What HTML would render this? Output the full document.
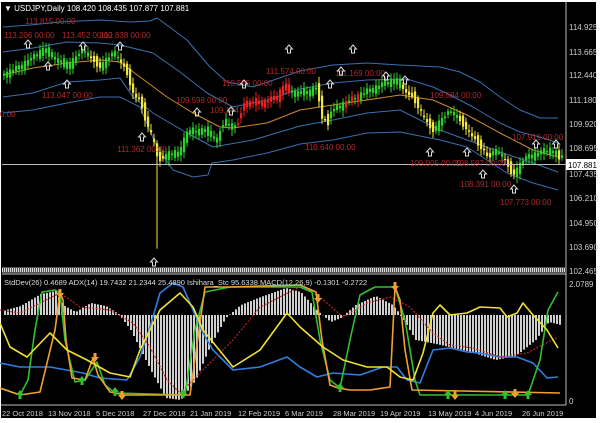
<!DOCTYPE html>
<html><head><meta charset="utf-8"><style>
html,body{margin:0;padding:0;background:#fff;width:600px;height:423px;overflow:hidden}
svg{display:block}
text{font-family:"Liberation Sans",sans-serif}
</style></head><body>
<svg id="s" width="600" height="423" viewBox="0 0 600 423" xmlns="http://www.w3.org/2000/svg">
<rect x="0" y="0" width="600" height="423" fill="#fff"/>
<rect x="1" y="2" width="595" height="416" fill="#000"/>
<line x1="566" y1="2" x2="566" y2="405" stroke="#bbb" stroke-width="1"/>
<line x1="1" y1="405" x2="566" y2="405" stroke="#bbb" stroke-width="1"/>
<g id="bands" fill="none" stroke-width="1" stroke-linejoin="round">
<path stroke="#3a6fb0" d="M3 27L30 25L60 22L100 20L130 22L150 21L157 18L160 20L187 40L210 67L227 82L253 87L300 71L333 65L367 63L400 65L440 67L460 72L480 82L500 97L520 110L540 118L558 118"/>
<path stroke="#3a6fb0" d="M3 52L33 48L67 42L100 43L120 45L153 53L180 72L207 93L233 107L267 100L300 89L333 83L367 80L407 79L433 87L450 95L473 107L500 123L520 132L540 137L558 143"/>
<path stroke="#d08a2a" d="M3 75L33 68L67 63L100 60L120 62L140 77L167 97L193 113L220 127L233 128L267 123L300 110L333 105L400 95L433 100L467 115L500 133L533 150L558 157"/>
<path stroke="#3a6fb0" d="M3 97L33 93L67 82L100 80L120 78L133 97L153 113L187 133L213 147L253 140L300 126L333 120L367 113L400 110L440 130L467 140L500 152L533 163L558 172"/>
<path stroke="#3a6fb0" d="M3 113L33 110L67 103L100 97L120 97L140 107L157 147L173 170L193 177L208 175L212 163L233 160L267 153L300 144L333 140L367 133L400 132L440 140L467 147L487 160L507 173L533 183L558 190"/>
</g>
<g id="candles"></g>
<line x1="2" y1="164.5" x2="566" y2="164.5" stroke="#bbb" stroke-width="1"/>
<rect x="566" y="159" width="30" height="11" fill="#fff"/>
<text x="568" y="168" font-size="8" fill="#000">107.881</text>
<g font-size="8" fill="#ccc">
<text x="569" y="30">114.925</text><text x="569" y="55">113.665</text><text x="569" y="78">112.440</text>
<text x="569" y="103">111.180</text><text x="569" y="127">109.920</text><text x="569" y="151">108.695</text>
<text x="569" y="177">107.435</text><text x="569" y="201">106.210</text><text x="569" y="226">104.950</text>
<text x="569" y="250">103.690</text><text x="569" y="274">102.465</text><text x="569" y="287">2.0789</text>
<text x="569" y="404">0</text>
</g>
<g font-size="8" fill="#b02a2a">
<text x="25" y="24">113.815 00:00</text><text x="4" y="38">113.206 00:00</text><text x="62" y="38">113.452 00:00</text>
<text x="100" y="38">112.838 00:00</text><text x="42" y="98">113.047 00:00</text><text x="0" y="117">0.00</text>
<text x="176" y="103">109.598 00:00</text><text x="210" y="113">109.144</text><text x="222" y="86">110.525 00:00</text>
<text x="266" y="74">111.574 00:00</text><text x="335" y="76">111.169 00:00</text><text x="117" y="152">111.362 00:00</text>
<text x="305" y="150">110.640 00:00</text><text x="430" y="98">109.584 00:00</text><text x="410" y="166">109.005 00:00</text>
<text x="455" y="166">108.597 00:00</text><text x="460" y="187">108.391 00:00</text><text x="500" y="205">107.773 00:00</text>
<text x="512" y="140">107.919 00:00</text>
</g>
<g id="arrows" fill="none" stroke="#ddd" stroke-width="1"></g>
<text x="4" y="11" font-size="8" fill="#fff">▼ USDJPY,Daily  108.420 108.435 107.877 107.881</text>
<rect x="2" y="267" width="563" height="6" fill="#555"/>
<rect x="2" y="268" width="563" height="4" fill="url(#dots)"/>
<defs><pattern id="dots" width="2" height="4" patternUnits="userSpaceOnUse"><rect width="1" height="4" fill="#ddd"/></pattern></defs>
<line x1="2" y1="274" x2="566" y2="274" stroke="#ccc"/>
<g id="hist"></g>
<g id="ind" fill="none" stroke-width="1.6"></g>
<text x="4" y="285" font-size="7.5" fill="#ddd">StdDev(26) 0.4689  ADX(14) 19.7432 21.2344 25.4890  Ishihara_Stc 95.6338  MACD(12,26,9) -0.1301 -0.2722</text>
<g font-size="7.5" fill="#ccc">
<text x="2" y="416">22 Oct 2018</text><text x="48" y="416">13 Nov 2018</text><text x="96" y="416">5 Dec 2018</text>
<text x="143" y="416">27 Dec 2018</text><text x="190" y="416">21 Jan 2019</text><text x="238" y="416">12 Feb 2019</text>
<text x="285" y="416">6 Mar 2019</text><text x="333" y="416">28 Mar 2019</text><text x="380" y="416">19 Apr 2019</text>
<text x="428" y="416">13 May 2019</text><text x="475" y="416">4 Jun 2019</text><text x="522" y="416">26 Jun 2019</text>
</g>
</svg>
<script>
var NS="http://www.w3.org/2000/svg";
function el(p,t,a){var e=document.createElementNS(NS,t);for(var k in a)e.setAttribute(k,a[k]);document.getElementById(p).appendChild(e);return e;}
var PY=[[3,75],[20,67],[43,50],[67,67],[83,50],[100,67],[113,53],[120,60],[127,73],[133,93],[140,100],[145,118],[153,140],[158,160],[170,153],[177,157],[187,133],[203,130],[217,140],[223,123],[237,127],[243,103],[263,103],[277,97],[283,87],[293,93],[307,93],[317,87],[323,123],[333,110],[360,95],[393,80],[413,97],[425,120],[433,130],[450,110],[458,118],[470,133],[487,155],[500,152],[513,175],[525,158],[540,153],[550,150],[558,157]];
function yAt(x){for(var i=1;i<PY.length;i++){if(x<=PY[i][0]){var a=PY[i-1],b=PY[i],t=(x-a[0])/(b[0]-a[0]);return a[1]+(b[1]-a[1])*t;}}return PY[PY.length-1][1];}
function price(x){return 114.925-(yAt(x)-27)/19.58;}
function Y(p){return 27+(114.925-p)*19.58;}
for(var x=4;x<=562;x+=3){
 var p0=price(x-3),p1=price(x),n=Math.sin(x*1.7)*0.25;
 var o=p0+n,c=p1-n*0.5;var hi=Math.max(o,c)+0.12+Math.abs(Math.sin(x*2.3))*0.2,lo=Math.min(o,c)-0.12-Math.abs(Math.cos(x*1.3))*0.2;
 var col="#2fd12f";
 if(p1-price(x-9)<-0.35)col="#f2e640";
 if((x>235&&x<292)||(x>345&&x<360&&x%2==0))col="#ee2020";
 if(x==157)lo=103.6;
 el("candles","line",{x1:x,y1:Y(hi),x2:x,y2:Y(lo),stroke:col,"stroke-width":1});
 var yt=Y(Math.max(o,c)),yb=Y(Math.min(o,c));if(yb-yt<1.5)yb=yt+1.5;
 el("candles","rect",{x:x-1,y:yt,width:2.2,height:yb-yt,fill:col});
}
[[48,62],[28,40],[67,80],[83,42],[120,42],[142,133],[197,108],[244,80],[231,107],[289,45],[330,80],[341,67],[353,45],[386,72],[405,76],[430,148],[467,148],[483,170],[514,185],[536,140],[556,140],[154,258]].forEach(function(a){
 var x=a[0],y=a[1];el("arrows","path",{d:"M"+x+" "+y+"l-3.5 4h2v4h3v-4h2z"});});
function curve(pts,c,dash){var d="";pts.forEach(function(p,i){d+=(i?"L":"M")+p[0]+" "+p[1];});var a={d:d,stroke:c,"stroke-linejoin":"round"};if(dash){a["stroke-dasharray"]="2 1.5";a["stroke-width"]=1.2;}el("ind","path",a);}
function H(x){var k=[[5,310],[20,306],[40,294],[55,291],[62,305],[75,312],[90,303],[105,306],[118,314],[130,330],[150,370],[165,398],[180,400],[195,380],[210,345],[225,318],[240,305],[260,297],[285,288],[300,292],[318,312],[330,322],[340,318],[355,305],[375,296],[392,305],[400,315],[415,340],[440,345],[470,352],[495,360],[515,356],[535,340],[548,322],[560,325]];for(var i=1;i<k.length;i++)if(x<=k[i][0]){var a=k[i-1],b=k[i],t=(x-a[0])/(b[0]-a[0]);return a[1]+(b[1]-a[1])*t;}return 320;}
for(var x=4;x<=560;x+=3){var y=H(x);el("hist","rect",{x:x,y:Math.min(y,315),width:2,height:Math.abs(y-315)||1,fill:"#cfcfcf"});}
curve([[0,363],[20,367],[50,367],[83,373],[100,378],[127,380],[140,357],[150,327],[160,293],[173,283],[183,287],[193,310],[203,333],[213,350],[233,370],[260,367],[287,357],[300,367],[317,377],[333,373],[360,375],[383,367],[397,367],[407,380],[420,383],[433,350],[450,348],[467,352],[480,353],[500,357],[517,357],[533,363],[547,378],[558,377]],"#2f7fe0");
curve([[0,310],[20,313],[60,293],[80,307],[110,310],[133,323],[150,347],[167,380],[180,393],[200,373],[233,340],[260,307],[300,287],[320,297],[343,317],[367,303],[390,297],[410,307],[433,333],[450,345],[473,348],[500,357],[527,353],[558,337]],"#c02020",1);
curve([[0,388],[20,395],[28,380],[35,330],[42,292],[55,290],[60,293],[65,340],[75,382],[85,380],[97,362],[105,385],[115,393],[185,395],[195,330],[205,292],[230,287],[300,287],[312,292],[320,340],[330,380],[340,388],[350,340],[360,295],[375,287],[395,287],[405,320],[415,380],[420,395],[528,395],[540,360],[548,310],[558,292]],"#30c030");
curve([[0,388],[20,395],[40,392],[55,330],[60,292],[63,300],[66,340],[72,378],[85,380],[93,358],[98,375],[110,392],[125,395],[190,395],[205,287],[230,287],[300,285],[316,292],[322,340],[330,385],[338,388],[350,390],[370,390],[390,387],[395,287],[400,300],[405,350],[412,390],[560,393]],"#f0a030");
curve([[0,323],[10,347],[27,357],[50,333],[67,350],[87,360],[110,373],[130,377],[140,350],[160,310],[180,293],[193,307],[203,330],[233,367],[260,350],[287,313],[300,327],[323,347],[343,360],[367,367],[387,367],[400,377],[413,380],[423,353],[433,313],[440,305],[450,315],[467,313],[480,307],[500,308],[507,317],[517,313],[523,303],[533,315],[547,330],[558,348]],"#f0e030");
[[20,398,"#30c030"],[82,384,"#30c030"],[115,395,"#30c030"],[183,397,"#30c030"],[340,391,"#30c030"],[448,398,"#30c030"],[505,398,"#30c030"],[528,398,"#30c030"]].forEach(function(a){el("ind","path",{d:"M"+a[0]+" "+(a[1]-8)+"l-4 5h2.5v4h3v-4h2.5z",fill:a[2],stroke:"none"});});
[[60,290],[95,354],[122,392],[395,283],[318,295],[455,392],[515,390]].forEach(function(a){el("ind","path",{d:"M"+a[0]+" "+(a[1]+8)+"l-4 -5h2.5v-4h3v4h2.5z",fill:"#f0a030",stroke:"none"});});
</script>
</body></html>
